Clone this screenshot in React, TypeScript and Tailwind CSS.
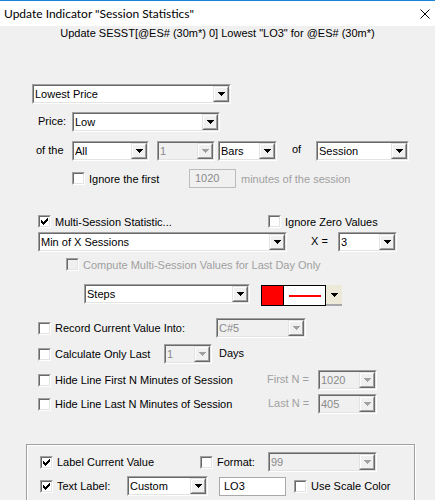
import React from "react";

function Arrow({ disabled }: { disabled?: boolean }) {
  return (
    <svg width="7" height="4" viewBox="0 0 7 4" shapeRendering="crispEdges">
      <path d="M0 0H7V1H6V2H5V3H4V4H3V3H2V2H1V1H0Z" fill={disabled ? "#a0a0a0" : "#000"} />
    </svg>
  );
}

function Combo({ cls, text, disabled }: { cls: string; text: string; disabled?: boolean }) {
  return (
    <div
      className={`${cls} shrink-0 h-[20px] flex border border-t-[#a0a0a0] border-l-[#a0a0a0] border-r-white border-b-white`}
    >
      <div
        className={`flex flex-1 min-w-0 border border-t-[#696969] border-l-[#696969] border-r-[#e3e3e3] border-b-[#e3e3e3] ${
          disabled ? "bg-[#f0f0f0]" : "bg-white"
        }`}
      >
        <span
          className={`flex-1 min-w-0 pl-[1px] text-[11px] leading-[16px] whitespace-nowrap overflow-hidden ${
            disabled ? "text-[#8a8a8a]" : "text-black"
          }`}
        >
          {text}
        </span>
        <div className="w-[16px] h-[16px] shrink-0 flex border border-t-[#e3e3e3] border-l-[#e3e3e3] border-r-[#696969] border-b-[#696969]">
          <div className="flex-1 flex items-center justify-center border border-t-white border-l-white border-r-[#a0a0a0] border-b-[#a0a0a0] bg-[#f0f0f0]">
            <Arrow disabled={disabled} />
          </div>
        </div>
      </div>
    </div>
  );
}

function Check({ checked, disabled }: { checked?: boolean; disabled?: boolean }) {
  return (
    <div className="w-[13px] h-[13px] shrink-0 border border-t-[#a0a0a0] border-l-[#a0a0a0] border-r-white border-b-white">
      <div
        className={`w-full h-full flex items-center justify-center border border-t-[#696969] border-l-[#696969] border-r-[#e3e3e3] border-b-[#e3e3e3] ${
          disabled ? "bg-[#f0f0f0]" : "bg-white"
        }`}
      >
        {checked && (
          <svg width="7" height="7" viewBox="0 0 7 7" shapeRendering="crispEdges">
            <rect x="0" y="2" width="1" height="3" fill="#000" />
            <rect x="1" y="3" width="1" height="3" fill="#000" />
            <rect x="2" y="4" width="1" height="3" fill="#000" />
            <rect x="3" y="3" width="1" height="3" fill="#000" />
            <rect x="4" y="2" width="1" height="3" fill="#000" />
            <rect x="5" y="1" width="1" height="3" fill="#000" />
            <rect x="6" y="0" width="1" height="3" fill="#000" />
          </svg>
        )}
      </div>
    </div>
  );
}

function CB({
  cls,
  label,
  checked,
  disabled,
}: {
  cls?: string;
  label: string;
  checked?: boolean;
  disabled?: boolean;
}) {
  return (
    <div className={`flex items-center shrink-0 ${cls ?? ""}`}>
      <Check checked={checked} disabled={disabled} />
      <span
        className={`ml-[4px] whitespace-nowrap leading-[14px] ${disabled ? "text-[#a0a0a0]" : "text-black"}`}
      >
        {label}
      </span>
    </div>
  );
}

export default function App() {
  return (
    <div className="w-[435px] h-[500px] overflow-hidden bg-[#f0f0f0] font-['Liberation_Sans',Arial,sans-serif] text-[11px] text-black">
      {/* Title bar */}
      <div className="h-[26px] bg-white border-t border-[#1883d7] flex items-center">
        <span className="pl-[4px] font-['Lato',sans-serif] text-[12px] leading-[16px] text-black whitespace-nowrap">
          Update Indicator "Session Statistics"
        </span>
        <svg className="ml-auto mr-[5px]" width="10" height="10" viewBox="0 0 10 10">
          <path d="M0.5 0.5L9.5 9.5M9.5 0.5L0.5 9.5" stroke="#000" strokeWidth="1" />
        </svg>
      </div>

      {/* Subtitle */}
      <div className="h-[14px] leading-[14px] text-center whitespace-nowrap">
        Update SESST[@ES# (30m*) 0] Lowest "LO3" for @ES# (30m*)
      </div>

      {/* Row 1 */}
      <div className="mt-[44px] h-[20px] flex pl-[32px]">
        <Combo cls="w-[199px]" text="Lowest Price" />
      </div>

      {/* Row 2 */}
      <div className="mt-[8px] h-[20px] flex items-center pl-[38px]">
        <span className="w-[34px] shrink-0 pb-[3px] leading-[14px]">Price:</span>
        <Combo cls="w-[148px]" text="Low" />
      </div>

      {/* Row 3 */}
      <div className="mt-[9px] h-[20px] flex items-center pl-[36px]">
        <span className="w-[36px] shrink-0 pb-[3px] leading-[14px]">of the</span>
        <Combo cls="w-[77px]" text="All" />
        <Combo cls="ml-[8px] w-[58px]" text="1" disabled />
        <Combo cls="ml-[3px] w-[59px]" text="Bars" />
        <span className="ml-[15px] w-[24px] shrink-0 pb-[4px] leading-[14px]">of</span>
        <Combo cls="w-[93px]" text="Session" />
      </div>

      {/* Row 4 */}
      <div className="mt-[8px] h-[19px] flex items-center pl-[72px]">
        <CB cls="w-[117px]" label="Ignore the first" />
        <div className="w-[47px] h-[19px] shrink-0 border border-[#bcbcbc] bg-[#f0f0f0] pl-[5px] leading-[17px] text-[#8a8a8a]">
          1020
        </div>
        <span className="ml-[5px] text-[#a0a0a0] whitespace-nowrap leading-[14px]">minutes of the session</span>
      </div>

      {/* Row 5 */}
      <div className="mt-[27px] h-[13px] flex items-center pl-[38px]">
        <CB cls="w-[230px]" label="Multi-Session Statistic..." checked />
        <CB label="Ignore Zero Values" />
      </div>

      {/* Row 6 */}
      <div className="mt-[4px] h-[20px] flex items-center pl-[38px]">
        <Combo cls="w-[249px]" text="Min of X Sessions" />
        <span className="ml-[24px] w-[27px] shrink-0 pb-[2px] leading-[14px]">X =</span>
        <Combo cls="w-[59px]" text="3" />
      </div>

      {/* Row 7 */}
      <div className="mt-[6px] h-[13px] flex items-center pl-[66px]">
        <CB label="Compute Multi-Session Values for Last Day Only" disabled />
      </div>

      {/* Row 8 */}
      <div className="mt-[13px] h-[22px] flex items-start pl-[84px]">
        <Combo cls="w-[166px]" text="Steps" />
        <div className="ml-[11px] mt-[1px] h-[21px] flex shrink-0">
          <div className="w-[65px] h-full flex border border-black">
            <div className="w-[22px] h-full bg-[#ff0000] border-r border-black" />
            <div className="flex-1 h-full bg-white flex items-center justify-center">
              <div className="w-[32px] h-[2px] bg-[#ff0000]" />
            </div>
          </div>
          <div className="w-[16px] h-full bg-[#ece9d8] border-b-2 border-[#a7a6aa] flex items-center justify-center">
            <Arrow />
          </div>
        </div>
      </div>

      {/* Row 9 */}
      <div className="mt-[12px] h-[20px] flex items-center pl-[38px]">
        <CB cls="w-[178px]" label="Record Current Value Into:" />
        <Combo cls="w-[90px]" text="C#5" disabled />
      </div>

      {/* Row 10 */}
      <div className="mt-[6px] h-[20px] flex items-center pl-[38px]">
        <CB cls="w-[126px]" label="Calculate Only Last" />
        <Combo cls="w-[48px]" text="1" disabled />
        <span className="ml-[7px] pb-[3px] leading-[14px]">Days</span>
      </div>

      {/* Row 11 */}
      <div className="mt-[6px] h-[20px] flex items-center pl-[38px]">
        <CB cls="w-[229px]" label="Hide Line First N Minutes of Session" />
        <span className="w-[51px] shrink-0 pb-[3px] leading-[14px] text-[#a0a0a0] whitespace-nowrap">First N =</span>
        <Combo cls="w-[59px]" text="1020" disabled />
      </div>

      {/* Row 12 */}
      <div className="mt-[4px] h-[20px] flex items-center pl-[38px]">
        <CB cls="w-[230px]" label="Hide Line Last N Minutes of Session" />
        <span className="w-[50px] shrink-0 pb-[3px] leading-[14px] text-[#a0a0a0] whitespace-nowrap">Last N =</span>
        <Combo cls="w-[59px]" text="405" disabled />
      </div>

      {/* Group box */}
      <div className="mt-[30px] ml-[26px] w-[389px] h-[80px] border border-[#a0a0a0] shadow-[inset_1px_1px_0_#fff,1px_1px_0_#fff] pt-[7px]">
        <div className="h-[20px] flex items-center pl-[13px]">
          <CB cls="w-[160px]" label="Label Current Value" checked />
          <CB cls="w-[68px]" label="Format:" />
          <Combo cls="w-[109px]" text="99" disabled />
        </div>
        <div className="mt-[4px] h-[20px] flex items-center pl-[13px]">
          <CB cls="w-[87px]" label="Text Label:" checked />
          <Combo cls="w-[81px]" text="Custom" />
          <div className="ml-[11px] w-[67px] h-[19px] shrink-0 border border-[#a9a9a9] bg-white pl-[4px] leading-[17px]">
            LO3
          </div>
          <CB cls="ml-[8px]" label="Use Scale Color" />
        </div>
      </div>
    </div>
  );
}
